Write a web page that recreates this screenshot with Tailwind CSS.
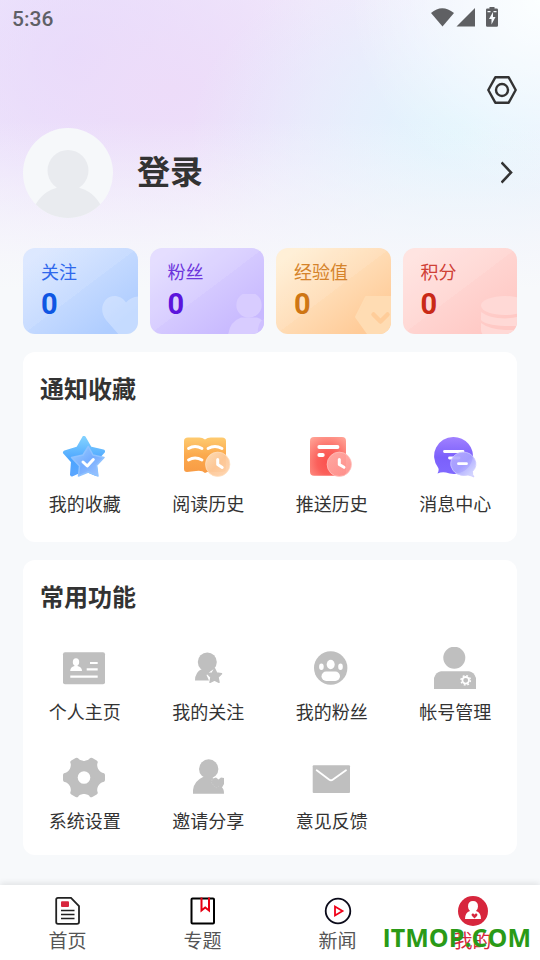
<!DOCTYPE html>
<html lang="zh-CN">
<head>
<meta charset="utf-8">
<meta name="viewport" content="width=device-width, initial-scale=1">
<title>我的</title>
<script src="https://cdn.jsdelivr.net/npm/@tailwindcss/browser@4"></script>
</head>
<body class="bg-[#f7f8fa] font-['Roboto','Noto_Sans_CJK_SC',sans-serif] text-[#333]">
<div class="relative flex min-h-screen flex-col bg-[linear-gradient(to_bottom,transparent_120px,#f7f9fb_290px),radial-gradient(circle_at_100%_0,#fbffff_0,#fbffff00_190px),radial-gradient(ellipse_270px_190px_at_460px_135px,#e0f4fd_0,#e0f4fd00_100%),radial-gradient(ellipse_300px_190px_at_170px_90px,#eddcf9_0,#eddcf900_100%),radial-gradient(ellipse_240px_220px_at_80px_60px,#e4dafd_0,#e4dafd00_100%),linear-gradient(#f3edfc,#f3edfc)]">

  <!-- Status bar -->
  <div class="flex h-[38px] items-center justify-between pr-[38px] pl-3 text-[#5f5f66]">
    <span class="text-[21px] leading-6 font-medium">5:36</span>
    <svg class="h-[22px] w-[70px] overflow-visible" viewBox="0 0 70 22" fill="#5f6063" aria-hidden="true">
      <path d="M-1 5Q10-4.500 22 5L10.500 18.500Z"/>
      <path d="M43 0V18.500H24.500Z"/>
      <path fill-rule="evenodd" d="M57.500-1h5v1.500h2.200q1.300 0 1.300 1.300v15.700q0 1.300-1.300 1.300h-9.400q-1.300 0-1.300-1.300V1.800q0-1.300 1.300-1.300h2.200ZM61 4l-4 7h2.500v5.500l4-7.500H61ZM55.500 3v1.200h3V3Zm6 0v1.200h3V3Z"/>
    </svg>
  </div>

  <header class="px-[23px]">
    <div class="flex h-[90px] justify-end pt-[37px]">
      <button type="button" aria-label="设置" class="size-[30px]">
        <svg viewBox="0 0 30 30" fill="none" stroke="#333" stroke-width="2.400" stroke-linejoin="round"><path d="M8.300 2.300H21.700L28.700 15 21.700 27.700H8.300L1.300 15Z"/><circle cx="15" cy="15" r="6"/></svg>
      </button>
    </div>
    <a href="#login" class="flex items-center">
      <svg class="size-[90px] rounded-full" viewBox="0 0 90 90" aria-hidden="true">
        <rect width="90" height="90" fill="#f6f8fa"/>
        <circle cx="45" cy="42.500" r="20.500" fill="#e9ebef"/>
        <path d="M10 82Q18 62 38 59H52Q72 62 80 82V90H10Z" fill="#e9ebef"/>
      </svg>
      <span class="ml-6 flex-1 text-[33px] leading-10 font-bold">登录</span>
      <svg class="h-6 w-4" viewBox="0 0 16 24" fill="none" stroke="#333" stroke-width="2.600" aria-hidden="true"><path d="M.5 1.500 10 11.500 .5 21.500"/></svg>
    </a>
  </header>

  <main class="flex flex-col gap-[18px] px-[23px] pt-[30px] pb-[30px]">
    <div class="grid grid-cols-4 gap-3">
      <a href="#follow" class="relative h-[86px] overflow-hidden rounded-xl bg-[linear-gradient(143deg,#ffffff18_50%,transparent_50%),linear-gradient(143deg,#d9e6ff_10%,#afcdff_85%)] pt-[13px] pl-[18px]">
        <svg class="absolute right-0 bottom-0 size-10" viewBox="0 0 40 40" fill="#ffffff48" aria-hidden="true"><path d="M28 8.500C23 1 13 0 7.500 6 2.500 12 3.500 20 8 26L22 42H40V2.500Q33 3 28 8.500Z"/></svg>
        <div class="text-[18px] leading-6 text-[#2f68ec]">关注</div><div class="mt-[3px] text-[29px] leading-8 font-bold text-[#0f56e3]">0</div>
      </a>
      <a href="#fans" class="relative h-[86px] overflow-hidden rounded-xl bg-[linear-gradient(143deg,#ffffff18_50%,transparent_50%),linear-gradient(143deg,#e2dbff_10%,#c8b9ff_85%)] pt-[13px] pl-[18px]">
        <svg class="absolute right-0 bottom-0 size-10" viewBox="0 0 40 40" aria-hidden="true"><g fill="#d8ccff"><path d="M4 42Q5 28 17 23.500H33Q40 26 40 30V42Z"/><circle cx="25" cy="11" r="12.700"/></g><path d="M34 40Q33 28 40 25V40Z" fill="#cfc0ff"/></svg>
        <div class="text-[18px] leading-6 text-[#6d35dc]">粉丝</div><div class="mt-[3px] text-[29px] leading-8 font-bold text-[#5b15dc]">0</div>
      </a>
      <a href="#experience" class="relative h-[86px] overflow-hidden rounded-xl bg-[linear-gradient(143deg,#ffffff18_50%,transparent_50%),linear-gradient(143deg,#ffeed3_10%,#ffcb98_85%)] pt-[13px] pl-[18px]">
        <svg class="absolute right-0 bottom-0 size-10" viewBox="0 0 40 40" aria-hidden="true"><path d="M15 3H44V44H20L5 23Z" fill="#ffdcb3" stroke="#ffdcb3" stroke-width="2" stroke-linejoin="round"/><path d="M22.500 20.500 29.500 27.500 36.500 20.500" fill="none" stroke="#ffcd9a" stroke-width="4.500" stroke-linecap="round" stroke-linejoin="round"/></svg>
        <div class="text-[18px] leading-6 text-[#d5832a]">经验值</div><div class="mt-[3px] text-[29px] leading-8 font-bold text-[#cf7614]">0</div>
      </a>
      <a href="#points" class="relative h-[86px] overflow-hidden rounded-xl bg-[linear-gradient(143deg,#ffffff18_50%,transparent_50%),linear-gradient(143deg,#ffe1de_10%,#ffc9c5_85%)] pt-[13px] pl-[18px]">
        <svg class="absolute right-0 bottom-0 size-10" viewBox="0 0 40 40" fill="#ffd9d6" aria-hidden="true"><ellipse cx="28" cy="11.500" rx="24" ry="9.500"/><path d="M4 18Q12 24 28 24.500 36 24 40 23V32H28Q8 31 4 26Z"/><path d="M4 29Q12 35 28 36H40V42H8Q4 40 4 36Z"/></svg>
        <div class="text-[18px] leading-6 text-[#cf4036]">积分</div><div class="mt-[3px] text-[29px] leading-8 font-bold text-[#c92a17]">0</div>
      </a>
    </div>

    <section class="rounded-xl bg-white pt-5 pb-[25px]">
      <h2 class="pl-[17px] text-2xl leading-9 font-bold">通知收藏</h2>
      <div class="mt-7 grid grid-cols-4 text-[18px] leading-6">
        <a href="#favorites" class="flex flex-col items-center gap-[15px]">
          <svg class="h-[42px] w-12" viewBox="0 0 48 42" aria-hidden="true">
            <defs><linearGradient id="s1" x2="0" y2="1"><stop stop-color="#80d0ff"/><stop offset=".6" stop-color="#4ba5ff"/><stop offset="1" stop-color="#5aa6ff"/></linearGradient><linearGradient id="s2" x2="1" y2="1"><stop stop-color="#9ccfff"/><stop offset=".5" stop-color="#75adff"/><stop offset="1" stop-color="#a4c7ff"/></linearGradient></defs>
            <path d="M23 2 29 12.500 42 15.500 33.500 25 35 38 23 33 11 38.500 12 25.500 4 16.500 17 12.500Z" fill="url(#s1)" stroke="url(#s1)" stroke-width="4" stroke-linejoin="round"/>
            <path d="M27.300 10.500 32 19 43 21.500 35.500 29.500 37 40 27.300 36 17.500 40 18.500 30 10.500 21.500 22 19Z" fill="url(#s2)" stroke="#8fc2ff" stroke-width="1.500" stroke-linejoin="round"/>
            <path d="M22 26 26.300 30 32.300 23.500" fill="none" stroke="#fff" stroke-width="3" stroke-linecap="round" stroke-linejoin="round"/>
          </svg>我的收藏</a>
        <a href="#reading" class="flex flex-col items-center gap-[15px]">
          <svg class="h-[42px] w-12" viewBox="0 0 48 42" aria-hidden="true">
            <defs><linearGradient id="b1" x2="0" y2="1"><stop stop-color="#fecb70"/><stop offset=".5" stop-color="#fba94d"/><stop offset="1" stop-color="#f89b44"/></linearGradient><linearGradient id="b2" x2="1" y2="1"><stop stop-color="#fde0bd"/><stop offset=".5" stop-color="#fdc898"/><stop offset="1" stop-color="#ffd5b0"/></linearGradient></defs>
            <path d="M0 5Q0 1.500 4 1.500H14Q18 1 21 3.500 24 1 28 1.500H38Q42 1.500 42 5V33Q42 36 38 36H29Q24 35 21 37 18 34 12 35L3 36Q0 36 0 33Z" fill="url(#b1)"/>
            <path d="M4.500 12.500Q11 8.500 18 12.500M24 12.500Q31 8.500 38 12.500M4.500 24Q11 20 18 24" fill="none" stroke="#fff" stroke-width="2.800" stroke-linecap="round"/>
            <circle cx="33.700" cy="28.300" r="12.200" fill="url(#b2)" fill-opacity=".95" stroke="#ffe1c2" stroke-width=".7"/>
            <path d="M33.700 23.500V28.500L38.200 31.500" fill="none" stroke="#fff" stroke-width="3" stroke-linecap="round" stroke-linejoin="round"/>
          </svg>阅读历史</a>
        <a href="#push" class="flex flex-col items-center gap-[15px]">
          <svg class="h-[42px] w-12" viewBox="0 0 48 42" aria-hidden="true">
            <defs><radialGradient id="p1" cx=".5" cy=".65" r=".75"><stop stop-color="#fb514e"/><stop offset=".4" stop-color="#fb605b"/><stop offset="1" stop-color="#ffa093"/></radialGradient><linearGradient id="p2" x2="1" y2="1"><stop stop-color="#ffb1ab"/><stop offset="1" stop-color="#ff8c88"/></linearGradient></defs>
            <rect x="2" y="1" width="36" height="38.700" rx="4" fill="url(#p1)"/>
            <path d="M11.300 11H29.500M11.300 19H14.800" stroke="#fff" stroke-width="3.800" stroke-linecap="round"/>
            <circle cx="31.300" cy="28.300" r="12.200" fill="url(#p2)" fill-opacity=".92" stroke="#ffc6c1" stroke-width=".7"/>
            <path d="M31.300 23.500V28.500L36 31.300" fill="none" stroke="#fff" stroke-width="3" stroke-linecap="round" stroke-linejoin="round"/>
          </svg>推送历史</a>
        <a href="#messages" class="flex flex-col items-center gap-[15px]">
          <svg class="h-[42px] w-12" viewBox="0 0 48 42" aria-hidden="true">
            <defs><linearGradient id="m1" x2="0" y2="1"><stop stop-color="#a181ff"/><stop offset=".55" stop-color="#7b60fb"/><stop offset="1" stop-color="#8069ff"/></linearGradient><linearGradient id="m2" x2="1" y2="1"><stop stop-color="#b7adff"/><stop offset=".5" stop-color="#a9a4ff"/><stop offset="1" stop-color="#d9e0ff"/></linearGradient></defs>
            <path d="M22.300 1A19.300 18.500 0 1 1 15 36.500Q11 35.500 6.500 37.500 8.500 34 7 31.500A19 19 0 0 1 22.300 1Z" fill="url(#m1)"/>
            <path d="M13.500 15.500H32M18.500 22H28" stroke="#fff" stroke-width="2.800" stroke-linecap="round"/>
            <path d="M31.700 16A13.300 11.800 0 0 1 41.500 35.500Q41 38.500 43 41 40 39.500 37 39A13.300 11.800 0 1 1 31.700 16Z" fill="url(#m2)" fill-opacity=".9" stroke="#cdc9ff" stroke-width=".8"/>
            <path d="M27.500 27.700H35.500" stroke="#fff" stroke-width="2.800" stroke-linecap="round"/>
          </svg>消息中心</a>
      </div>
    </section>

    <section class="rounded-xl bg-white pt-5 pb-[21px]">
      <h2 class="pl-[17px] text-2xl leading-9 font-bold">常用功能</h2>
      <div class="mt-[31px] grid grid-cols-4 gap-y-[31px] text-[18px] leading-6">
        <a href="#home-page" class="flex flex-col items-center gap-3">
          <svg class="h-[42px] w-12" viewBox="0 0 48 42" fill="#bfbfbf" aria-hidden="true"><rect x="2" y="5.300" width="42" height="32" rx="2"/><g fill="#fff"><ellipse cx="15" cy="15" rx="3.200" ry="3.800"/><path d="M13.500 17h3v2q4.500 1 4.500 5H9.200q0-4 4.300-5Z"/></g><path d="M29 16H36.700M25.700 22.300H36.700M9.300 29.700H36.700" stroke="#fff" stroke-width="2.200"/></svg>个人主页</a>
        <a href="#my-follow" class="flex flex-col items-center gap-3">
          <svg class="h-[42px] w-12" viewBox="0 0 48 42" fill="#bfbfbf" aria-hidden="true"><circle cx="23.300" cy="15" r="9.500"/><path d="M18 22H29L22.500 28 25 33.500H11Q11 25 18 22Z"/><path d="M30.500 21.500 32.700 26 37.500 26.800 34 30.200 35 35.300 30.500 33 26 35.300 27 30.200 23.500 26.800 28.300 26Z" stroke="#bfbfbf" stroke-width="1.500" stroke-linejoin="round"/></svg>我的关注</a>
        <a href="#my-fans" class="flex flex-col items-center gap-3">
          <svg class="h-[42px] w-12" viewBox="0 0 48 42" fill="#bfbfbf" aria-hidden="true"><circle cx="22.700" cy="21" r="16.700"/><g fill="#fff"><ellipse cx="22.700" cy="17.500" rx="4" ry="4.700"/><ellipse cx="13.400" cy="19.700" rx="2.300" ry="3.300"/><ellipse cx="32.500" cy="19.700" rx="2.300" ry="3.300"/><rect x="13.500" y="24.500" width="18.500" height="9.500" rx="4.700"/></g></svg>我的粉丝</a>
        <a href="#account" class="flex flex-col items-center gap-3">
          <svg class="h-[42px] w-12" viewBox="0 0 48 42" fill="#bfbfbf" aria-hidden="true"><circle cx="23.300" cy="10.700" r="11"/><path d="M3 42V31Q5 25 10 24.300H38Q43 25 45 31V42Z"/><circle cx="34.700" cy="33.300" r="3.300" fill="none" stroke="#fff" stroke-width="1.800"/><circle cx="34.700" cy="33.300" r="4.700" fill="none" stroke="#fff" stroke-width="1.400" stroke-dasharray="1.850 1.841"/></svg>帐号管理</a>
        <a href="#settings" class="flex flex-col items-center gap-3">
          <svg class="h-[42px] w-12" viewBox="0 0 48 42" fill="#bfbfbf" aria-hidden="true"><circle cx="23" cy="21.500" r="16"/><path id="tooth" d="M9 13Q6 17 3.500 17 2 17.300 2 19V24Q2 25.700 3.500 26 6 26 9 30H37Q40 26 42.500 26 44 25.700 44 24V19Q44 17.300 42.500 17 40 17 37 13Z"/><use href="#tooth" transform="rotate(60 23 21.500)"/><use href="#tooth" transform="rotate(120 23 21.500)"/><circle cx="23" cy="21.500" r="6.300" fill="#fff"/></svg>系统设置</a>
        <a href="#invite" class="flex flex-col items-center gap-3">
          <svg class="h-[42px] w-12" viewBox="0 0 48 42" fill="#bfbfbf" aria-hidden="true"><circle cx="24.700" cy="13" r="9.700"/><path d="M19 21H28L29 22.500 32 21.500 34.500 23.500 37 21.500 40 22V28L38 31.500Q40 33 40 37.700H9V34Q10 25 19 21Z"/><path d="M28 23.500 27.500 27 32 32 35 30" fill="none" stroke="#cacaca" stroke-width=".8" stroke-dasharray="1.500 1"/></svg>邀请分享</a>
        <a href="#feedback" class="flex flex-col items-center gap-3">
          <svg class="h-[42px] w-12" viewBox="0 0 48 42" aria-hidden="true"><rect x="4.700" y="9.300" width="37.300" height="27.700" rx="1" fill="#bfbfbf"/><path d="M8.700 14.300 21 23.500Q23 25 25 23.500L38 14.300" fill="none" stroke="#fff" stroke-width="1.800" stroke-linecap="round"/></svg>意见反馈</a>
      </div>
    </section>
  </main>

  <nav class="relative mt-auto grid grid-cols-4 bg-white pt-[11px] pb-1.5 text-[19px] leading-6 text-[#555] shadow-[0_-2px_6px_rgba(0,0,0,0.09)]">
    <a href="#home" class="flex flex-col items-center gap-1"><svg class="size-[30px]" viewBox="0 0 30 30" fill="none" stroke="#222" stroke-width="1.800" aria-hidden="true"><path d="M5 1.800H18L26 10V26Q26 27.800 24 27.800H5Q3.200 27.800 3.200 26V3.600Q3.200 1.800 5 1.800Z"/><path d="M8 14.500H21.500M8 18.500H21.500M8 22.500H21.500" stroke-width="1.500"/><rect x="8" y="5.300" width="8" height="5.700" rx="1" fill="#d7263d" stroke="none"/></svg>首页</a>
    <a href="#topics" class="flex flex-col items-center gap-1"><svg class="size-[30px]" viewBox="0 0 30 30" fill="none" stroke-width="2" aria-hidden="true"><rect x="3.500" y="2.500" width="22.500" height="25" rx="1" stroke="#000"/><path d="M13.500 1.500V14.500L17.200 11.500 21 14.500V1.500" stroke="#e60012"/></svg>专题</a>
    <a href="#news" class="flex flex-col items-center gap-1"><svg class="size-[30px]" viewBox="0 0 30 30" fill="none" stroke-width="1.800" aria-hidden="true"><circle cx="15" cy="15" r="12.300" stroke="#0b0b1a"/><path d="M12 10.500V19.500L19.500 15Z" stroke="#f00018"/></svg>新闻</a>
    <a href="#mine" aria-current="page" class="flex flex-col items-center gap-1 text-[#d7263d]"><svg class="size-[30px]" viewBox="0 0 30 30" aria-hidden="true"><circle cx="15" cy="15" r="15" fill="#d7263d"/><path d="M15 5Q20 5 20 10.500 20 13 18 15 23 16.500 23 23H7Q7 16.500 12 15 10 13 10 10.500 10 5 15 5Z" fill="#fff"/><path d="M16.500 22.500 13.800 19.800Q13 18 14.500 17.500 16 17.300 16.500 18.700 17 17.300 18.500 17.500 20 18 19.200 19.800Z" fill="#d7263d"/></svg>我的</a>
    <div class="pointer-events-none absolute right-[9px] bottom-[7px] font-['Open_Sans',sans-serif] text-[25px] leading-8 font-bold text-[#2a9a17]">ITMOP.COM</div>
  </nav>
</div>
</body>
</html>
